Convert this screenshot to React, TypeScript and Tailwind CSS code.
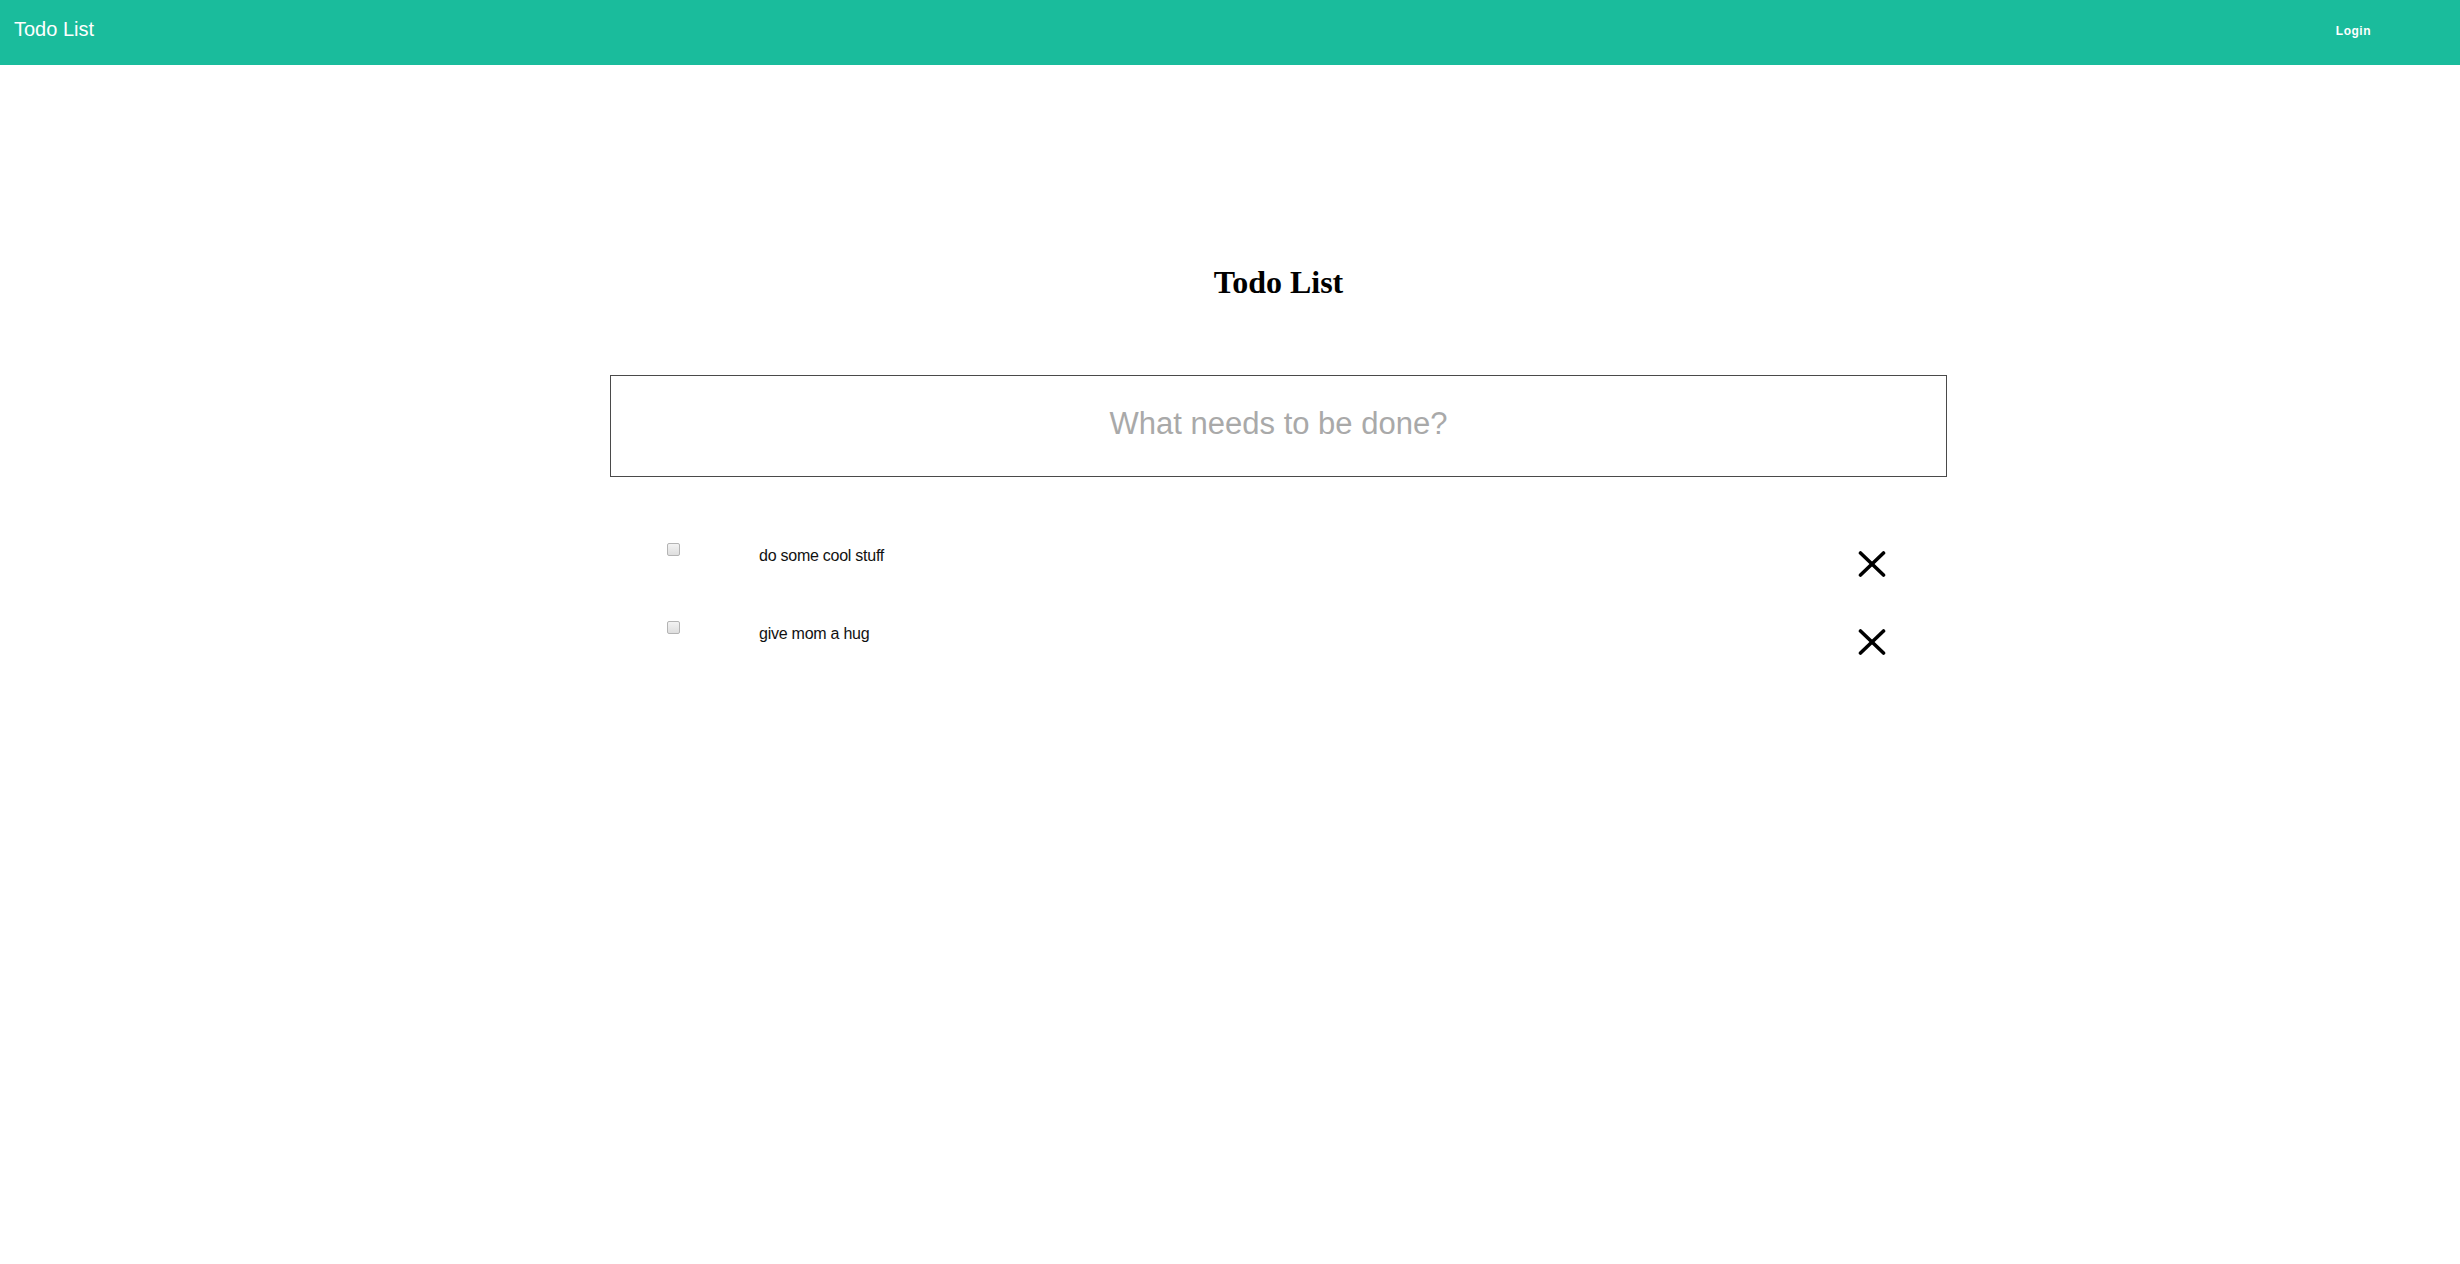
import React from "react";

function XIcon() {
  return (
    <svg width="28" height="26" viewBox="0 0 28 26" className="block">
      <line x1="2.5" y1="2" x2="25.5" y2="24" stroke="#000" strokeWidth="3.6" strokeLinecap="round" />
      <line x1="25.5" y1="2" x2="2.5" y2="24" stroke="#000" strokeWidth="3.6" strokeLinecap="round" />
    </svg>
  );
}

function Row({ text }: { text: string }) {
  return (
    <div className="flex h-[78px] items-start">
      <div className="ml-[57px] mt-[2px] h-[13px] w-[13px] rounded-[2px] border border-[#b4b4b4] bg-gradient-to-b from-[#f3f3f3] to-[#dedede]" />
      <div className="ml-[79px] mt-[3px] flex-1 text-[16px] leading-[24px] text-[#111] [font-family:'Liberation_Sans',Arial,sans-serif] tracking-[-0.25px]">
        {text}
      </div>
      <div className="mr-[61px] mt-[10px]">
        <XIcon />
      </div>
    </div>
  );
}

export default function App() {
  return (
    <div className="min-h-[1264px] bg-white [font-family:'Liberation_Sans',Arial,sans-serif]">
      <header className="flex h-[65px] items-start justify-between bg-[#1abc9c] text-white">
        <div className="ml-[14px] mt-[17px] text-[20px] leading-[24px]">Todo List</div>
        <div className="mr-[89px] mt-[24px] text-[12px] font-bold leading-[14px] tracking-[0.5px]">Login</div>
      </header>
      <main className="ml-[610px] w-[1337px]">
        <h1 className="mt-[201px] text-center text-[32px] font-bold leading-[32px] [font-family:'Liberation_Serif','Times_New_Roman',serif]">
          Todo List
        </h1>
        <div className="mt-[77px] flex h-[102px] items-center justify-center border border-[#4a4a4a] pb-[4px]">
          <span className="text-[31px] text-[#a9a9a9]">What needs to be done?</span>
        </div>
        <div className="mt-[64px]">
          <Row text="do some cool stuff" />
          <Row text="give mom a hug" />
        </div>
      </main>
    </div>
  );
}
